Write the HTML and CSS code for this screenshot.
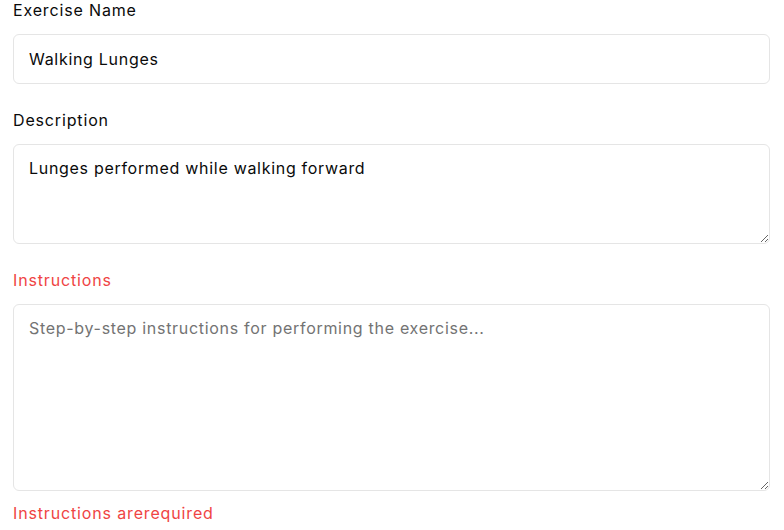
FILE: index.html
```html
<!DOCTYPE html>
<html lang="en">
<head>
<meta charset="utf-8">
<title>Exercise form</title>
<link rel="stylesheet" href="styles.css">
</head>
<body>
<form class="form">
  <div class="field">
    <label class="label" for="name">Exercise Name</label>
    <input class="input" id="name" type="text" value="Walking Lunges">
  </div>
  <div class="field">
    <label class="label" for="desc">Description</label>
    <textarea class="textarea textarea-desc" id="desc">Lunges performed while walking forward</textarea>
  </div>
  <div class="field">
    <label class="label label-error" for="instr">Instructions</label>
    <textarea class="textarea textarea-instr" id="instr" placeholder="Step-by-step instructions for performing the exercise..."></textarea>
    <p class="error">Instructions arerequired</p>
  </div>
</form>
</body>
</html>
```

FILE: styles.css
```css
* { box-sizing: border-box; }

html, body {
  margin: 0;
  padding: 0;
  background: #ffffff;
}

body {
  font-family: Inter, "Noto Sans", sans-serif;
  font-size: 16px;
  letter-spacing: 0.7px;
  color: #0a0a0a;
  overflow: hidden;
}

.form {
  display: flex;
  flex-direction: column;
  gap: 24px;
  padding: 0 14px 0 13px;
  margin-top: -2px;
}

.field {
  display: flex;
  flex-direction: column;
}

.label {
  font-size: 16px;
  line-height: 24px;
  font-weight: 400;
  letter-spacing: 0.85px;
  color: #0a0a0a;
  margin-bottom: 12px;
}

.label-error {
  color: #ef4444;
}

.input,
.textarea {
  width: 100%;
  font-family: Inter, "Noto Sans", sans-serif;
  font-size: 16px;
  line-height: 24px;
  letter-spacing: 0.7px;
  color: #0a0a0a;
  background: #ffffff;
  border: 1px solid #e5e5e5;
  border-radius: 6px;
  outline: none;
  margin: 0;
}

.input {
  height: 50px;
  padding: 0 15px;
}

.textarea {
  padding: 11px 15px;
  resize: vertical;
  display: block;
}

.textarea::placeholder {
  color: #737373;
}

.textarea-desc {
  height: 100px;
}

.textarea-instr {
  height: 187px;
}

.error {
  margin: 10px 0 0;
  font-size: 16px;
  line-height: 24px;
  font-weight: 400;
  letter-spacing: 0.85px;
  color: #ef4444;
}
```
